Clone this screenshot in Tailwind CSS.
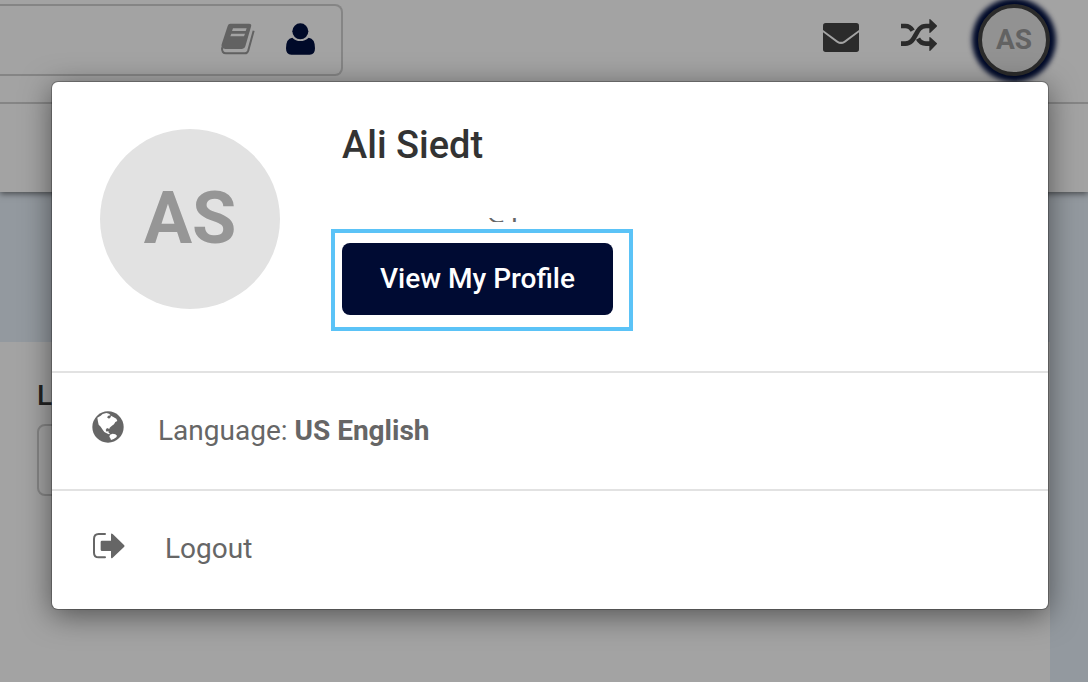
<!DOCTYPE html>
<html lang="en">
<head>
    <meta charset="UTF-8">
    <meta name="viewport" content="width=device-width, initial-scale=1.0">
    <script src="https://cdn.jsdelivr.net/npm/@tailwindcss/browser@4"></script>
    <title>My Account</title>
</head>
<body class="relative flex flex-col min-h-screen overflow-hidden bg-[#93999f] font-['Roboto',sans-serif] text-[28px] leading-8 text-[#666]">

    <!-- top bar -->
    <header class="relative bg-[#a3a3a3] shadow-[0_2px_6px_rgba(0,0,0,0.5)]">
        <div class="flex items-start justify-between pr-[38px] border-b-2 border-[#858585] h-[104px]">
            <div class="flex items-center gap-[30px] w-[343px] h-[72px] mt-1 pr-[25px] border-2 border-l-0 border-[#858585] rounded-r-lg">
                <input type="search" aria-label="Search" class="flex-1 min-w-0 h-full outline-none">
                <button type="button" aria-label="Courses">
                    <svg class="block w-[35px] h-[34px] mb-0.5" viewBox="60 66 105 102" fill="none">
                        <path fill="#626262" fill-rule="evenodd" d="M91 71H147Q156 71 153 80L136 139Q134 147 126 147H76Q66 146 65 141Q63 137 66 130L83 78Q85 71 91 71ZM99 85L96 93H137L140 85ZM94 101L91 109H132L135 101Z"/>
                        <path stroke="#626262" stroke-width="6" stroke-linejoin="round" d="M66 142Q65 160 78 160H135Q142 160 145 151L161 92"/>
                    </svg>
                </button>
                <button type="button" aria-label="People">
                    <svg class="block w-[31px] h-[34px] mb-0.5" viewBox="255 66 93 102" fill="#000a29">
                        <circle cx="301" cy="94" r="24"/>
                        <path d="M277 113Q287 123 301 123T326 113Q345 115 345 145Q345 164 329 164H274Q258 164 258 145Q258 115 277 113Z"/>
                    </svg>
                </button>
            </div>

            <div class="flex items-center h-20">
                <button type="button" aria-label="Messages" class="mb-1.5 mr-[42px]">
                    <svg class="block w-9 h-[29px]" viewBox="69 69 108 87" fill="#2b2b2b">
                        <path d="M69 90V77Q69 69 77 69H169Q177 69 177 77V90L133 122Q123 129 113 122Z"/>
                        <path d="M69 97L111 128Q123 136 135 128L177 97V148Q177 156 169 156H77Q69 156 69 148Z"/>
                    </svg>
                </button>
                <button type="button" aria-label="Switch" class="mb-2.5 mr-[41px]">
                    <svg class="block w-9 h-8" viewBox="303 57 108 96" fill="none" stroke="#2b2b2b" stroke-width="14">
                        <path d="M303 131H316C350 131 344 78 378 78H391"/>
                        <path d="M303 78H316Q330 78 338 92"/>
                        <path d="M354 116Q362 131 378 131H391"/>
                        <path fill="#2b2b2b" stroke="none" d="M388 59Q388 56 391 58L410 76Q412 78 410 80L391 98Q388 100 388 97ZM388 113Q388 110 391 112L410 129Q412 131 410 133L391 152Q388 154 388 151Z"/>
                    </svg>
                </button>
                <button type="button" class="size-[72px] rounded-full border-4 border-[#2b2b2b] bg-[#929292] text-[#626262] font-bold shadow-[0_0_5px_6px_#000a29]">AS</button>
            </div>
        </div>
        <div class="h-[88px]"></div>
    </header>

    <!-- page content -->
    <main class="flex-1 mt-[150px] mr-[38px] pl-[37px] pt-[38px] bg-[#a3a3a3]">
        <label for="lang" class="block font-medium text-[#222]">L</label>
        <input id="lang" type="text" class="block w-1/2 h-[72px] mt-3 border-2 border-[#858585] rounded-lg">
    </main>

    <!-- account popover -->
    <section role="dialog" aria-label="Account" class="absolute top-[82px] left-[52px] right-10 pb-0.5 bg-white rounded-md shadow-[0_0_0_1px_rgba(0,0,0,0.25),0_6px_30px_rgba(0,0,0,0.5)]">
        <div class="flex gap-[62px] pl-12 pt-[47px] pb-14">
            <div class="flex items-center justify-center size-[180px] rounded-full bg-[#e2e2e2] text-[#969696] text-[72px] leading-none font-bold">AS</div>
            <div class="flex flex-col items-start">
                <h1 class="text-[38px] leading-8 font-medium text-[#333]">Ali Siedt</h1>
                <div class="flex items-end h-1 mt-[57px] ml-36 overflow-hidden">
                    <span class="leading-7">@p</span>
                </div>
                <div class="relative mt-[21px]">
                    <button type="button" class="block w-[271px] h-[72px] rounded-lg bg-[#000b33] text-white font-medium">View My Profile</button>
                    <span class="absolute -top-[14px] -bottom-4 -left-[11px] -right-5 border-4 border-[#5bc3f7] pointer-events-none"></span>
                </div>
            </div>
        </div>

        <a href="#" class="flex items-center gap-[34px] h-[118px] pl-10 border-t-2 border-[#e2e2e2]">
            <svg class="w-8 h-8 mb-2" viewBox="277 244 96 96">
                <circle cx="325" cy="292" r="47" fill="#666"/>
                <path fill="#fff" d="M293 264L303 258L309 253L320 250L328 252L333 257L326 258L322 263L328 267L333 263L334 258L341 262L350 267L353 274L347 277L343 284L336 289L330 294L329 298L322 295L318 301L321 306L326 304L327 309L331 312L328 314L321 311L314 307L309 300L303 291L297 285L295 276Z"/>
                <path fill="#fff" d="M331 315L339 312L347 314L352 318L350 323L342 328L334 331L332 326L329 321Z"/>
            </svg>
            <span>Language: <b>US English</b></span>
        </a>

        <a href="#" class="flex items-center gap-10 h-[118px] pl-10 border-t-2 border-[#e2e2e2]">
            <svg class="w-[33px] h-[27px] mb-2" viewBox="36 34 99 81" fill="none">
                <path stroke="#666" stroke-width="6" stroke-linecap="round" d="M75 40H56Q42 40 42 55V96Q42 110 56 110H75"/>
                <path fill="#666" d="M66 60H93V42Q93 36 98 40L132 73Q135 76 132 79L98 111Q93 115 93 109V91H66Q62 91 62 87V64Q62 60 66 60Z"/>
            </svg>
            <span>Logout</span>
        </a>
    </section>

</body>
</html>
